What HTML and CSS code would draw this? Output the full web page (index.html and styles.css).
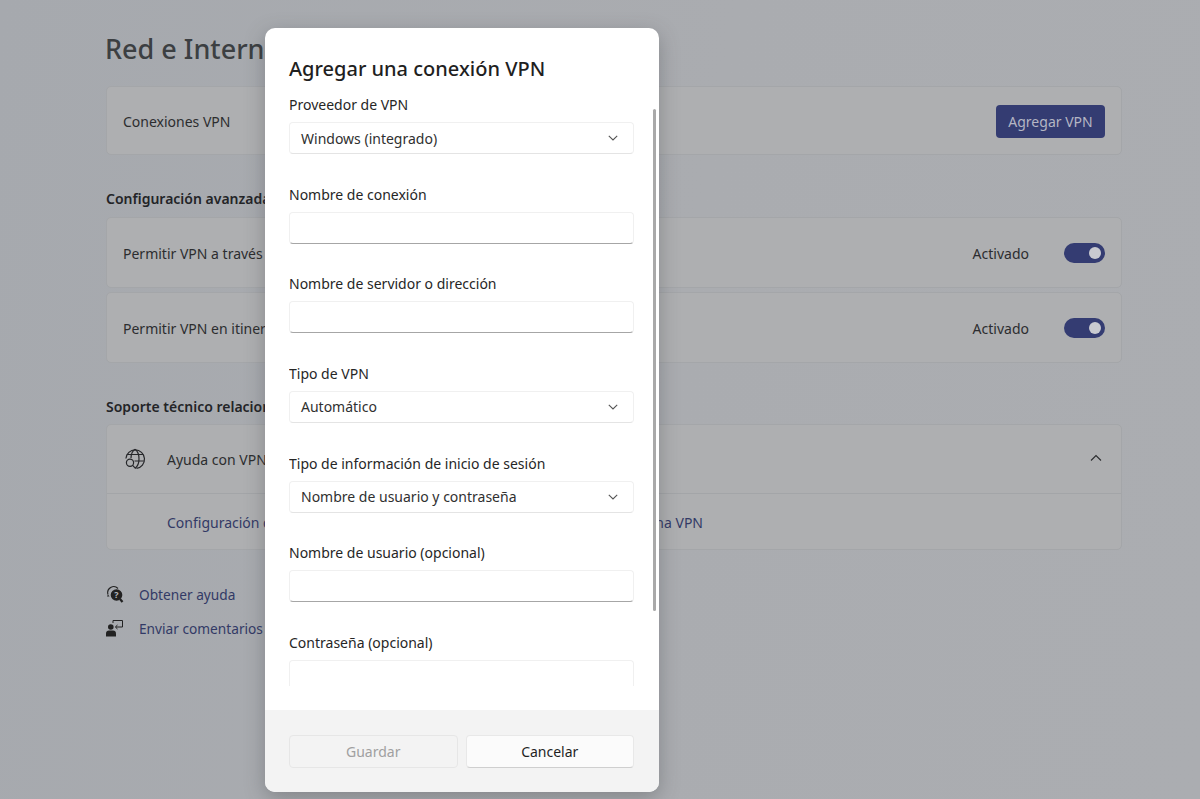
FILE: index.html
```html
<!DOCTYPE html>
<html lang="es">
<head>
<meta charset="utf-8">
<title>Agregar una conexión VPN</title>
<link rel="stylesheet" href="styles.css">
</head>
<body>
<main class="page">
  <h1 class="page-title">Red e Internet</h1>
  <section class="card row row-vpn">
    <span class="row-text">Conexiones VPN</span>
    <button class="accent-btn">Agregar VPN</button>
  </section>
  <h2 class="section-title">Configuración avanzada</h2>
  <section class="card row row-toggle">
    <span class="row-text">Permitir VPN a través de redes de uso medido</span>
    <div class="toggle-wrap"><span class="row-text">Activado</span><span class="toggle"><span class="knob"></span></span></div>
  </section>
  <section class="card row row-toggle second">
    <span class="row-text">Permitir VPN en itinerancia</span>
    <div class="toggle-wrap"><span class="row-text">Activado</span><span class="toggle"><span class="knob"></span></span></div>
  </section>
  <h2 class="section-title tight">Soporte técnico relacionado</h2>
  <section class="card help">
    <div class="help-head">
      <svg class="globe" width="22" height="22" viewBox="0 0 22 22" fill="none" stroke="#26272a" stroke-width="1.2"><path d="M1.900 10.500A9.300 9.300 0 1 1 12.500 20.400"/><path d="M2.800 6.500h16.400M10.500 13h9.300"/><path d="M11 1.300C8.500 3 7 6.500 7 10M11 1.300C13.500 3 15 7 15 11c0 4-1.500 7.500-4 9.400"/><circle cx="6" cy="14.800" r="3.600"/><path d="M8.600 17.400l2.700 2.800"/></svg>
      <span class="help-title">Ayuda con VPN</span>
      <svg class="chev-up" width="12" height="8" viewBox="0 0 12 8" fill="none" stroke="#2b2c2e" stroke-width="1.100"><path d="M1 6.500 6 1.500l5 5"/></svg>
    </div>
    <div class="help-links">
      <a class="link">Configuración de una conexión VPN</a>
      <a class="link">Cómo configurar una VPN</a>
    </div>
  </section>
  <div class="side-links">
    <div class="side-link">
      <svg width="18" height="18" viewBox="0 0 18 18"><path d="M2 9.500A6 6 0 0 1 12 3.500" fill="none" stroke="#222" stroke-width="1.100"/><path d="M2 9.500 1 11.500h2.500z" fill="#222"/><circle cx="10.500" cy="10" r="5.800" fill="#222"/><path d="M14 14l2.500 3" stroke="#222" stroke-width="2.200"/><text x="10.500" y="13" text-anchor="middle" class="qmark">?</text></svg>
      <a class="link">Obtener ayuda</a>
    </div>
    <div class="side-link">
      <svg width="18" height="18" viewBox="0 0 18 18"><path d="M7 4V1.500h9.500V8H10" fill="none" stroke="#222" stroke-width="1"/><path d="M11.500 6 9.300 8l2.200 2" fill="none" stroke="#222" stroke-width="1"/><circle cx="4.800" cy="8" r="2.800" fill="#222"/><path d="M0 17.500v-3c0-1.800 1.200-3 3-3h4c1.800 0 3 1.200 3 3v3z" fill="#222"/></svg>
      <a class="link">Enviar comentarios</a>
    </div>
  </div>
</main>

<div class="modal" role="dialog">
  <div class="modal-main">
    <h2 class="modal-title">Agregar una conexión VPN</h2>
    <div class="fields">
      <div class="field">
        <label>Proveedor de VPN</label>
        <div class="control select"><span>Windows (integrado)</span><svg width="10" height="6" viewBox="0 0 10 6" fill="none" stroke="#555" stroke-width="1.100"><path d="M.8.800 5 5 9.200.8"/></svg></div>
      </div>
      <div class="field">
        <label>Nombre de conexión</label>
        <div class="control input"></div>
      </div>
      <div class="field">
        <label>Nombre de servidor o dirección</label>
        <div class="control input"></div>
      </div>
      <div class="field">
        <label>Tipo de VPN</label>
        <div class="control select"><span>Automático</span><svg width="10" height="6" viewBox="0 0 10 6" fill="none" stroke="#555" stroke-width="1.100"><path d="M.8.800 5 5 9.200.8"/></svg></div>
      </div>
      <div class="field">
        <label>Tipo de información de inicio de sesión</label>
        <div class="control select"><span>Nombre de usuario y contraseña</span><svg width="10" height="6" viewBox="0 0 10 6" fill="none" stroke="#555" stroke-width="1.100"><path d="M.8.800 5 5 9.200.8"/></svg></div>
      </div>
      <div class="field">
        <label>Nombre de usuario (opcional)</label>
        <div class="control input"></div>
      </div>
      <div class="field">
        <label>Contraseña (opcional)</label>
        <div class="control input"></div>
      </div>
    </div>
    <div class="scrollbar"></div>
  </div>
  <div class="modal-footer">
    <button class="btn disabled">Guardar</button>
    <button class="btn">Cancelar</button>
  </div>
</div>
</body>
</html>
```
FILE: styles.css
```css
* { box-sizing: border-box; }
html, body { margin: 0; height: 100%; }
body {
  height: 799px;
  overflow: hidden;
  font-family: "Noto Sans", "Open Sans", sans-serif;
  font-size: 14px;
  color: #2c2d2f;
  background: linear-gradient(100deg, #a6a9ae 0%, #aaacb0 55%, #abadb1 100%);
}
.page { width: 1016px; margin-left: 106px; padding-top: 29px; }
.page-title { margin: 0 0 18px -1px; font-size: 27px; line-height: 39px; font-weight: 500; color: #3c3f42; white-space: nowrap; }
.card { background: #aeafb1; border: 1px solid #a4a6a9; border-radius: 5px; }
.row { display: flex; align-items: center; justify-content: space-between; padding: 0 16px; white-space: nowrap; }
.row-text { padding-top: 2px; }
.row-vpn { height: 69px; }
.row-toggle { height: 71px; }
.row-toggle.second { margin-top: 4px; }
.section-title { margin: 34px 0 8px; font-size: 14px; line-height: 20px; font-weight: 600; color: #232427; }
.section-title.tight { margin-bottom: 7px; }
.accent-btn { width: 109px; height: 33px; margin-top: 1px; border: 0; border-radius: 4px; background: #343c72; color: #b4b6c4; font: inherit; font-size: 14px; }
.toggle-wrap { display: flex; align-items: center; gap: 35px; }
.toggle { width: 41px; height: 20px; border-radius: 10px; background: #343c72; display: flex; align-items: center; justify-content: flex-end; padding-right: 4px; }
.knob { width: 12px; height: 12px; border-radius: 50%; background: #c9cad0; }
.help { height: 126px; }
.help-head { height: 69px; display: flex; align-items: center; padding: 0 19px 0 17px; border-bottom: 1px solid #a3a5a8; }
.help-title { margin-left: 21px; flex: 1; }
.chev-up { margin-top: -2px; }
.help-links { display: flex; justify-content: space-between; padding: 19px 418px 0 60px; white-space: nowrap; }
.link { color: #333a66; }
.side-links { margin-top: 27px; font-size: 13.7px; }
.side-link { display: flex; align-items: center; gap: 15px; height: 34px; }
.qmark { font-size: 9px; font-weight: 700; fill: #b5b7bb; }

.modal {
  position: absolute; left: 265px; top: 28px; width: 394px; height: 764px;
  background: #fff; border-radius: 10px; overflow: hidden;
  box-shadow: 0 6px 20px rgba(60, 62, 66, .35);
  display: flex; flex-direction: column;
}
.modal-main { position: relative; flex: 1; padding: 27px 25px 0 24px; min-height: 0; }
.modal-title { margin: 0 0 10px; font-size: 20px; line-height: 28px; font-weight: 500; color: #1f1f1f; }
.fields { height: 593px; overflow: hidden; }
.field { height: 89.67px; }
.field label { display: block; height: 29px; line-height: 24px; font-size: 14px; color: #262626; }
.control { height: 32px; border: 1px solid #f0f0f0; border-radius: 4px; background: #fff; }
.input { border-bottom: 1px solid #a6a6a6; }
.select { display: flex; align-items: center; justify-content: space-between; padding: 0 15px 0 11px; border-bottom-color: #e4e4e4; font-size: 14px; color: #303030; }
.scrollbar { position: absolute; left: 388px; top: 81px; width: 3px; height: 502px; background: #a9a9a9; border-radius: 2px; }
.modal-footer { height: 82px; flex: none; background: #f3f3f3; padding: 25px 25px 0 24px; display: flex; gap: 8px; }
.btn { flex: 1; height: 33px; border: 1px solid #e8e8e8; border-bottom-color: #cfcfcf; border-radius: 4px; background: #fbfbfb; font: inherit; font-size: 14px; color: #1f1f1f; }
.btn.disabled { background: #f3f3f3; border-color: #e6e6e6; color: #a0a0a0; }
```
